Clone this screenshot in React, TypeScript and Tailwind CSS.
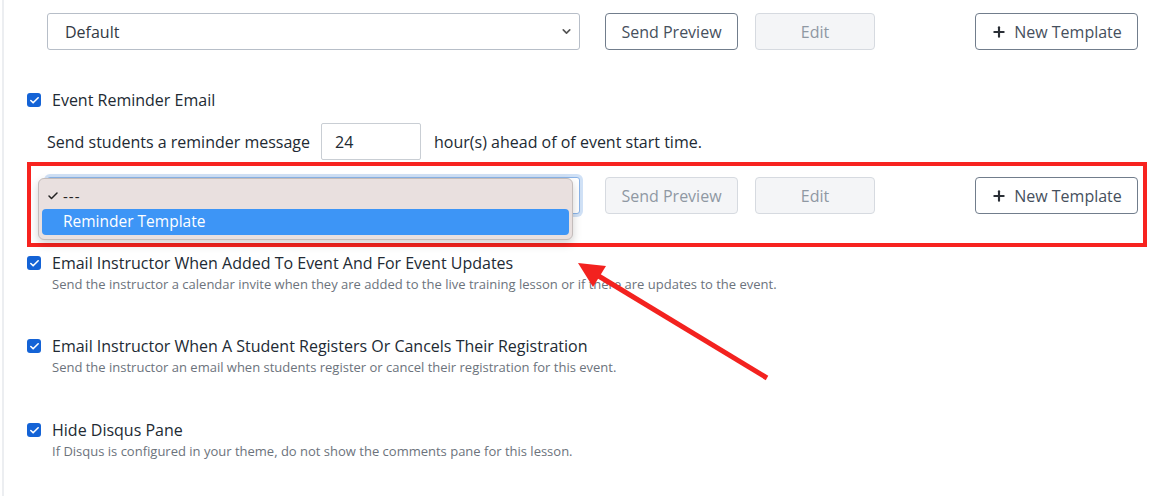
import { Plus, ChevronDown, Check } from 'lucide-react';

function Checkbox() {
  return (
    <span className="flex h-[14px] w-[14px] shrink-0 items-center justify-center rounded-[3px] bg-[#1463d6]">
      <Check className="h-[11px] w-[11px] text-white" strokeWidth={3.5} />
    </span>
  );
}

function TemplateRow({ value, focused, previewDisabled }: { value: string; focused?: boolean; previewDisabled?: boolean }) {
  return (
    <div className="flex items-center">
      <div
        className={`relative flex h-[37px] w-[533px] items-center rounded-[3px] border bg-white pl-[17px] text-[16px] text-[#333a44] ${
          focused ? 'border-[#8ab4e8] shadow-[0_0_0_3px_rgba(120,170,230,0.35)]' : 'border-[#b7bec8]'
        }`}
      >
        {value}
        <ChevronDown className="absolute right-[6px] h-[13px] w-[13px] text-[#555]" strokeWidth={3} />
      </div>
      <button
        className={`ml-[25px] h-[37px] w-[133px] rounded-[4px] border text-[16px] ${
          previewDisabled ? 'border-[#d6dae0] bg-[#f4f5f7] text-[#8f98a3]' : 'border-[#717d8c] bg-white text-[#46505d]'
        }`}
      >
        Send Preview
      </button>
      <button className="ml-[17px] h-[37px] w-[120px] rounded-[4px] border border-[#d6dae0] bg-[#f4f5f7] text-[16px] text-[#8f98a3]">
        Edit
      </button>
      <button className="ml-[100px] flex h-[37px] w-[163px] items-center justify-center gap-[7px] rounded-[4px] border border-[#717d8c] bg-white text-[16px] text-[#46505d]">
        <Plus className="h-[16px] w-[16px] text-[#2a2f36]" strokeWidth={3.2} />
        New Template
      </button>
    </div>
  );
}

function Option({ title, description, className }: { title: string; description: string; className: string }) {
  return (
    <div className={className}>
      <div className="flex h-[20px] items-center gap-[11px]">
        <Checkbox />
        <span className="text-[16px] text-[#222a33]">{title}</span>
      </div>
      <p className="mt-[3px] pl-[25px] text-[13px] leading-[16px] text-[#6c737c]">{description}</p>
    </div>
  );
}

export default function App() {
  return (
    <div className="relative h-[496px] w-[1160px] overflow-hidden bg-white font-['Open_Sans',sans-serif]">
      <div className="ml-[2px] h-full border-l-2 border-[#eceef1] pl-[23px]">
        <div className="pl-[20px] pt-[13px]">
          <TemplateRow value="Default" />
        </div>

        <div className="mt-[40px] flex h-[20px] items-center gap-[11px]">
          <Checkbox />
          <span className="text-[16px] text-[#222a33]">Event Reminder Email</span>
        </div>

        <div className="mt-[13px] flex items-center pl-[20px] text-[16px] text-[#222a33]">
          <span>Send students a reminder message</span>
          <div className="ml-[11px] flex h-[37px] w-[100px] items-center rounded-[2px] border border-[#c9ced4] pl-[13px]">24</div>
          <span className="ml-[13px]">hour(s) ahead of of event start time.</span>
        </div>

        <div className="relative mt-[2px] w-[1120px] border-4 border-[#f7231f] pb-[29px] pl-[16px] pt-[11px]">
          <TemplateRow value="" focused previewDisabled />
          <div className="absolute left-[7px] top-[12px] w-[535px] rounded-[6px] border border-[#c3bcbb] bg-[#e9e0df] px-[3px] pb-[4px] pt-[7px] shadow-[0_4px_10px_rgba(0,0,0,0.18)]">
            <div className="flex h-[20px] items-center pl-[5px] text-[15px] text-[#222]">
              <Check className="mr-[4px] h-[12px] w-[12px] text-[#222]" strokeWidth={3} />
              <span className="tracking-[1px]">---</span>
            </div>
            <div className="mt-[3px] flex h-[26px] items-center rounded-[4px] bg-[#3d95f6] pl-[21px] text-[15.5px] text-white">
              Reminder Template
            </div>
          </div>
        </div>

        <Option
          className="mt-[6px]"
          title="Email Instructor When Added To Event And For Event Updates"
          description="Send the instructor a calendar invite when they are added to the live training lesson or if there are updates to the event."
        />
        <Option
          className="mt-[44px]"
          title="Email Instructor When A Student Registers Or Cancels Their Registration"
          description="Send the instructor an email when students register or cancel their registration for this event."
        />
        <Option
          className="mt-[45px]"
          title="Hide Disqus Pane"
          description="If Disqus is configured in your theme, do not show the comments pane for this lesson."
        />
      </div>

      <svg className="pointer-events-none absolute left-0 top-0" width="1160" height="496">
        <line x1="767" y1="378" x2="592" y2="272" stroke="#f3221f" strokeWidth="5" />
        <polygon points="578,263 606,266 593,287" fill="#f3221f" />
      </svg>
    </div>
  );
}
